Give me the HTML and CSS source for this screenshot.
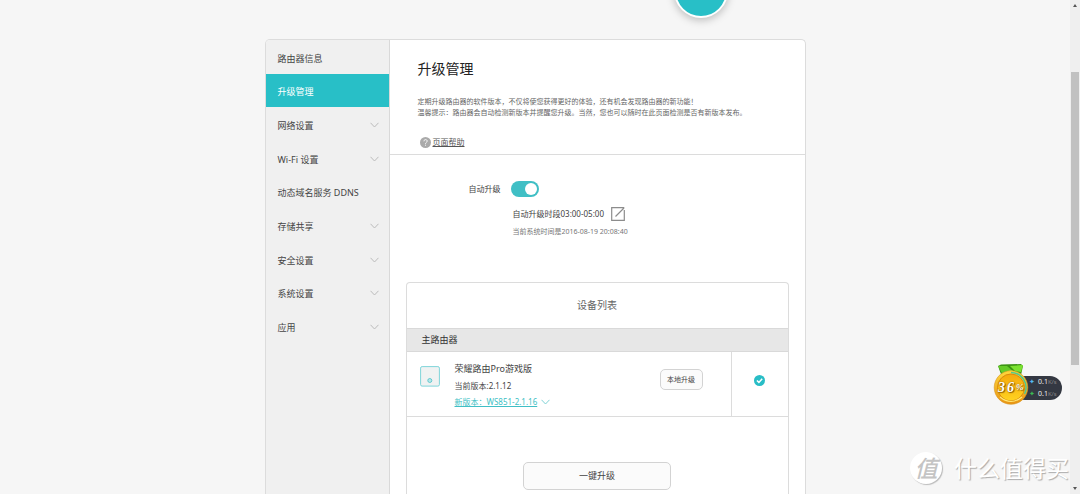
FILE: index.html
```html
<!DOCTYPE html>
<html lang="zh-CN">
<head>
<meta charset="utf-8">
<title>升级管理</title>
<link rel="stylesheet" href="styles.css">
</head>
<body>
<svg class="defs" aria-hidden="true">
  <symbol id="chevron" viewBox="0 0 9 6"><path d="M.5 .8 4.5 5 8.500 .8" fill="none" stroke="currentColor"/></symbol>
</svg>
<div class="page">
  <header class="top"><div class="orb"></div></header>
  <div class="panel">
    <nav class="menu">
      <a class="item" href="#">路由器信息</a>
      <a class="item active" href="#">升级管理</a>
      <a class="item" href="#">网络设置<svg class="arrow"><use href="#chevron"/></svg></a>
      <a class="item" href="#">Wi-Fi 设置<svg class="arrow"><use href="#chevron"/></svg></a>
      <a class="item" href="#">动态域名服务 DDNS</a>
      <a class="item" href="#">存储共享<svg class="arrow"><use href="#chevron"/></svg></a>
      <a class="item" href="#">安全设置<svg class="arrow"><use href="#chevron"/></svg></a>
      <a class="item" href="#">系统设置<svg class="arrow"><use href="#chevron"/></svg></a>
      <a class="item" href="#">应用<svg class="arrow"><use href="#chevron"/></svg></a>
    </nav>
    <main class="content">
      <section class="intro">
        <h1 class="title">升级管理</h1>
        <p class="desc">定期升级路由器的软件版本，不仅将使您获得更好的体验，还有机会发现路由器的新功能！<br>温馨提示：路由器会自动检测新版本并提醒您升级。当然，您也可以随时在此页面检测是否有新版本发布。</p>
        <a class="help" href="#">
          <svg class="help-icon" viewBox="0 0 11 11"><circle cx="5.500" cy="5.500" r="5.500" fill="#aaa"/><path d="M3.900 4.300C3.900 2 7.300 2.100 7.200 4.200 7.100 5.400 5.500 5.400 5.500 6.800M5.500 7.700V8.700" fill="none" stroke="#fff" stroke-width=".9"/></svg>
          <span class="help-text">页面帮助</span>
        </a>
      </section>
      <section class="settings">
        <div class="setting">
          <label class="setting-label" for="auto">自动升级</label>
          <input class="toggle" id="auto" type="checkbox" checked>
        </div>
        <div class="period">自动升级时段03:00-05:00
          <button class="edit" type="button" aria-label="编辑"><svg class="edit-icon" viewBox="0 0 14 14"><path d="M13.300 3V13.300H.7V.7H13.300M4.500 9.500 13 1" fill="none" stroke="#8c8c8c" stroke-width="1.200"/></svg></button>
        </div>
        <p class="clock">当前系统时间是2016-08-19 20:08:40</p>
      </section>
      <section class="devices">
        <h2 class="devices-title">设备列表</h2>
        <h3 class="group">主路由器</h3>
        <div class="device">
          <svg class="router" viewBox="0 0 20 21"><rect x=".6" y=".6" width="18.800" height="19.500" rx="1.500" fill="#f0f2f2" stroke="#7fd4d9"/><circle cx="9.800" cy="14.500" r="2" fill="#b9e7e9" stroke="#58c5cc" stroke-width=".9"/></svg>
          <div class="info">
            <div class="name">荣耀路由Pro游戏版</div>
            <div class="version">当前版本:2.1.12</div>
            <div class="update"><a class="new" href="#">新版本：WS851-2.1.16</a><svg class="arrow"><use href="#chevron"/></svg></div>
          </div>
          <button class="btn local" type="button">本地升级</button>
          <div class="pick"><svg class="check" viewBox="0 0 11 11"><circle cx="5.500" cy="5.500" r="5.500" fill="#28bdc6"/><path d="M2.900 5.500 4.900 7.400 8.200 3.800" fill="none" stroke="#fff" stroke-width="1.500"/></svg></div>
        </div>
        <div class="actions"><button class="btn all" type="button">一键升级</button></div>
      </section>
    </main>
  </div>
</div>
<div class="scrollbar">
  <svg class="tip" viewBox="0 0 4 3"><path d="M0 3 2 0 4 3Z" fill="#555"/></svg>
  <div class="thumb"></div>
  <svg class="tip" viewBox="0 0 4 3"><path d="M0 0 2 3 4 0Z" fill="#555"/></svg>
</div>
<div class="monitor">
  <svg class="medal" viewBox="0 0 36 42">
    <defs>
      <linearGradient id="gold" x1="0" y1="0" x2="0" y2="1"><stop offset="0" stop-color="#ffd83c"/><stop offset="1" stop-color="#e89413"/></linearGradient>
      <linearGradient id="face" x1="0" y1="0" x2="0" y2="1"><stop offset="0" stop-color="#f5a90c"/><stop offset="1" stop-color="#ffd321"/></linearGradient>
    </defs>
    <path d="M5 3 8 1.500 28 1 30 3 28 12 25 15 9 14Z" fill="#3c9413"/>
    <path d="M5 3 14 3 21 9 10 12Z" fill="#64cb28"/><path d="M17 3 30 2 28 9 22 8Z" fill="#7be230"/><path d="M10 10 18 7 27 11 22 13H12Z" fill="#a0ec48"/>
    <circle cx="18" cy="24.500" r="16.800" fill="url(#gold)" stroke="#d89522" stroke-width=".6"/>
    <circle cx="18" cy="24.500" r="13.500" fill="url(#face)" stroke="#da8b0d"/>
    <path d="M18 9.500A15 15 0 0 1 31.500 31" fill="none" stroke="#52c88d" stroke-width="1.500"/>
    <path d="M7 34Q18 43 29 34" fill="none" stroke="#ffe979" stroke-width="1.200"/>
  </svg>
  <div class="percent"><span>3</span><span>6</span><span class="sign">%</span></div>
  <div class="speeds">
    <div class="speed"><span class="up">✦</span>0.1<span class="unit">K/s</span></div>
    <div class="speed"><span class="down">✦</span>0.1<span class="unit">K/s</span></div>
  </div>
</div>
<div class="watermark"><span class="seal">值</span><span>什么值得买</span></div>
</body>
</html>
```
FILE: styles.css
```css
* { box-sizing: border-box; }
body {
  margin: 0;
  height: 100vh;
  overflow: hidden;
  display: flex;
  position: relative;
  background: #f6f6f6;
  color: #444;
  font-family: "Noto Sans", "Noto Sans CJK SC", sans-serif;
  font-size: 8px;
  line-height: 12px;
}
h1, h2, h3, p { margin: 0; font-weight: 400; }
a { color: inherit; text-decoration: none; }
button, input { font: inherit; color: inherit; margin: 0; }
.defs { position: absolute; width: 0; height: 0; }
.page {
  flex: 1;
  display: flex;
  flex-direction: column;
  align-items: center;
}
.top {
  width: 100%;
  max-width: 541px;
  flex: 0 0 39px;
  display: flex;
  justify-content: flex-end;
  padding-right: 78px;
}
.orb {
  width: 54px;
  height: 54px;
  margin-top: -36px;
  border: 2px solid #fff;
  border-radius: 50%;
  background: #28bfc7;
  box-shadow: 0 2px 8px rgba(0, 0, 0, .25);
}
.panel {
  flex: 1;
  width: 100%;
  max-width: 541px;
  display: flex;
  border: 1px solid #dcdcdc;
  border-bottom: 0;
  border-radius: 5px 5px 0 0;
  background: #fff;
  overflow: hidden;
}
.menu {
  width: 124px;
  display: grid;
  grid-template-rows: repeat(9, 1fr);
  background: #f0f0f0;
  border-right: 1px solid #d9d9d9;
  padding-bottom: 151px;
  font-size: 9px;
}
.item {
  display: flex;
  align-items: center;
  justify-content: space-between;
  padding: 4px 10px 0 12px;
}
.active { background: #28bfc7; color: #fff; }
.arrow { width: 9px; height: 6px; margin-bottom: 2px; color: #bbb; }
.content { flex: 1; display: flex; flex-direction: column; }
.intro {
  padding: 17px 28px 6px;
  border-bottom: 1px solid #dcdcdc;
}
.title { font-size: 14px; line-height: 24px; color: #222; }
.desc { margin-top: 15px; font-size: 7px; line-height: 11px; color: #666; white-space: nowrap; }
.help { display: flex; align-items: center; gap: 2px; margin-top: 18px; padding-left: 2px; }
.help-icon { width: 11px; height: 11px; }
.help-text { color: #555; text-decoration: underline; }
.settings { padding-top: 26px; }
.setting { display: flex; align-items: center; gap: 10px; height: 16px; }
.setting-label { width: 111px; text-align: right; }
.toggle {
  appearance: none;
  width: 28px;
  height: 16px;
  padding: 2px;
  border-radius: 8px;
  background: #40bfc5;
  display: flex;
  justify-content: flex-end;
}
.toggle::before { content: ""; width: 12px; height: 12px; border-radius: 50%; background: #fff; }
.period { display: flex; align-items: center; gap: 7px; margin: 10px 0 0 123px; }
.edit { display: flex; padding: 0; border: 0; background: none; }
.edit-icon { width: 14px; height: 14px; }
.clock { margin: 5px 0 0 123px; font-size: 7px; color: #777; }
.devices {
  flex: 1;
  margin: 44px 16px 0;
  border: 1px solid #dcdcdc;
  border-bottom: 0;
  border-radius: 4px 4px 0 0;
}
.devices-title { font-size: 10px; line-height: 45px; text-align: center; color: #666; }
.group {
  padding-left: 15px;
  font-size: 9px;
  line-height: 22px;
  color: #333;
  background: #e7e7e7;
  border: 1px solid #d9d9d9;
  border-width: 1px 0;
}
.device { display: flex; height: 65px; border-bottom: 1px solid #dcdcdc; }
.router { width: 20px; height: 21px; margin: 14px 15px 0 13px; }
.info { flex: 1; padding-top: 9px; }
.name { font-size: 9px; line-height: 16px; }
.version { line-height: 17px; }
.update { display: flex; align-items: center; gap: 4px; line-height: 16px; color: #40bfc5; }
.update .arrow { color: #80d2d6; margin: 0; }
.new { text-decoration: underline; }
.btn { padding: 0; border: 1px solid #d3d3d3; border-radius: 5px; background: #fbfbfb; }
.local { width: 43px; height: 21px; margin: 17px 28px 0 0; font-size: 7px; }
.pick { width: 57px; display: flex; align-items: center; justify-content: center; padding-bottom: 8px; border-left: 1px solid #dcdcdc; }
.check { width: 11px; height: 11px; }
.actions { padding-top: 45px; text-align: center; }
.all { width: 148px; height: 28px; font-size: 9px; }
.scrollbar {
  width: 10px;
  display: flex;
  flex-direction: column;
  align-items: center;
  padding: 4px 1px;
  background: #efefef;
}
.tip { width: 4px; height: 3px; }
.thumb { width: 8px; height: 293px; margin: 65px 0 auto; background: #c1c1c1; }
.monitor { position: absolute; right: 18px; top: 363px; width: 69px; height: 42px; }
.medal { position: absolute; z-index: 1; width: 36px; height: 42px; }
.percent {
  position: absolute;
  z-index: 2;
  left: 5px;
  top: 16px;
  display: flex;
  gap: 2px;
  color: #fff;
  font: italic bold 14px/17px "Liberation Serif", serif;
  text-shadow: 0 0 2px #8b5a00, 1px 1px 1px #8b5a00;
}
.sign { font-size: 9px; }
.speeds {
  position: absolute;
  left: 20px;
  top: 13px;
  width: 49px;
  height: 24px;
  padding-left: 16px;
  border-radius: 12px;
  background: #343842;
  color: #eee;
  font-size: 7px;
}
.speed { display: flex; }
.up, .down { width: 9px; color: #55b9f0; }
.down { color: #3cba54; }
.unit { color: #888; font-size: 6px; }
.watermark {
  position: absolute;
  right: 11px;
  bottom: 10px;
  display: flex;
  align-items: center;
  gap: 12px;
  color: #fff;
  font-family: "Noto Sans CJK SC", sans-serif;
  font-size: 23px;
  line-height: 33px;
  text-shadow: 1px 1px 1px #aaa;
}
.seal {
  width: 32px;
  height: 32px;
  border-radius: 50%;
  background: #fff;
  color: #c4c4c4;
  font-weight: 500;
  font-style: italic;
  line-height: 31px;
  text-align: center;
  text-shadow: none;
  box-shadow: 1px 1px 1px #bbb;
}
```
